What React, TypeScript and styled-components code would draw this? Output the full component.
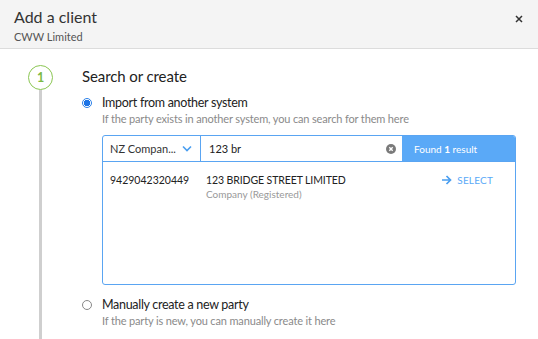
import styled, { createGlobalStyle } from "styled-components";

const GlobalStyle = createGlobalStyle`
  html, body {
    margin: 0;
    padding: 0;
    background: #fff;
    font-family: Lato, "Noto Sans", sans-serif;
    color: #222;
  }
  * { box-sizing: border-box; }
`;

const Modal = styled.div`
  width: 538px;
  height: 339px;
  overflow: hidden;
  background: #fff;
`;

const Header = styled.header`
  height: 49px;
  background: #f4f4f4;
  border-bottom: 1px solid #dcdcdc;
  padding: 7px 15px 0 14px;
  display: flex;
  justify-content: space-between;
  align-items: flex-start;
`;

const Title = styled.h1`
  margin: 0;
  font-size: 16px;
  font-weight: 400;
  line-height: 20px;
  color: #333;
`;

const Subtitle = styled.div`
  font-size: 11px;
  line-height: 16px;
  margin-top: 2px;
  color: #555;
`;

const Close = styled.button`
  border: 0;
  background: none;
  padding: 0;
  margin-top: 8px;
  width: 8px;
  height: 8px;
  cursor: pointer;
  display: flex;
`;

const Body = styled.div`
  display: flex;
  padding: 16px 0 0 28px;
`;

const Rail = styled.div`
  width: 25px;
  display: flex;
  flex-direction: column;
  align-items: center;
`;

const StepCircle = styled.div`
  width: 25px;
  height: 25px;
  border-radius: 50%;
  border: 1.5px solid #8bc653;
  color: #7cb944;
  font-size: 12.5px;
  font-weight: 700;
  display: flex;
  align-items: center;
  justify-content: center;
`;

const RailLine = styled.div`
  width: 3px;
  height: 260px;
  background: #cfcfcf;
`;

const Content = styled.div`
  margin-left: 29px;
  width: 414px;
`;

const StepTitle = styled.h2`
  margin: 0;
  font-size: 15px;
  font-weight: 400;
  line-height: 20px;
  color: #222;
  padding-top: 1px;
  letter-spacing: -0.1px;
`;

const Option = styled.div<{ $gap?: number }>`
  display: flex;
  margin-top: ${({ $gap }) => $gap ?? 0}px;
`;

const Radio = styled.span<{ $checked?: boolean }>`
  width: 10px;
  height: 10px;
  border-radius: 50%;
  margin: 4px 10px 0 0;
  flex: none;
  border: 1px solid ${({ $checked }) => ($checked ? "#2a7fe8" : "#888")};
  background: ${({ $checked }) =>
    $checked ? "radial-gradient(circle, #1d74e6 0 3px, #fff 3.4px)" : "#fff"};
`;

const OptionText = styled.div`
  flex: 1;
`;

const Label = styled.div`
  font-size: 12.5px;
  line-height: 17px;
  letter-spacing: -0.3px;
  color: #222;
`;

const Hint = styled.div`
  font-size: 11px;
  line-height: 16px;
  letter-spacing: -0.15px;
  color: #8a8a8a;
`;

const SearchBox = styled.div`
  margin-top: 8px;
  width: 414px;
  height: 150px;
  border: 1.5px solid #5aa5f2;
  border-radius: 3px;
  overflow: hidden;
`;

const SearchRow = styled.div`
  display: flex;
  height: 26px;
  border-bottom: 1.5px solid #5aa5f2;
`;

const SourceSelect = styled.div`
  width: 98px;
  border-right: 1.5px solid #5aa5f2;
  display: flex;
  align-items: center;
  justify-content: space-between;
  padding: 0 8px 0 7px;
  font-size: 11px;
  color: #333;
`;

const Query = styled.div`
  flex: 1;
  display: flex;
  align-items: center;
  justify-content: space-between;
  padding: 0 6px 0 8px;
  font-size: 11px;
  color: #222;
`;

const ClearIcon = styled.span`
  width: 10px;
  height: 10px;
  border-radius: 50%;
  background: #7a7a7a;
  display: flex;
`;

const Found = styled.div`
  width: 113px;
  background: #5aa9f7;
  color: #fff;
  font-size: 10px;
  display: flex;
  align-items: center;
  padding-left: 12px;
  b { font-weight: 700; }
`;

const ResultRow = styled.div`
  display: flex;
  padding: 11px 0 0 7px;
`;

const Number = styled.div`
  width: 96px;
  font-size: 10.5px;
  line-height: 14px;
  color: #222;
`;

const Party = styled.div`
  flex: 1;
`;

const PartyName = styled.div`
  font-size: 10.5px;
  line-height: 14px;
  letter-spacing: -0.1px;
  color: #222;
`;

const PartyType = styled.div`
  font-size: 10px;
  line-height: 14px;
  color: #999;
`;

const SelectButton = styled.button`
  border: 0;
  background: none;
  padding: 0;
  margin: 0 22px 0 0;
  height: 14px;
  display: flex;
  align-items: center;
  gap: 5px;
  font-family: inherit;
  font-size: 10px;
  color: #5aa9f7;
  letter-spacing: 0.2px;
`;

export default function App() {
  return (
    <Modal>
      <GlobalStyle />
      <Header>
        <div>
          <Title>Add a client</Title>
          <Subtitle>CWW Limited</Subtitle>
        </div>
        <Close aria-label="Close">
          <svg width="8" height="8" viewBox="0 0 8 8">
            <path d="M1 1 7 7M7 1 1 7" stroke="#333" strokeWidth="1.5" />
          </svg>
        </Close>
      </Header>
      <Body>
        <Rail>
          <StepCircle>1</StepCircle>
          <RailLine />
        </Rail>
        <Content>
          <StepTitle>Search or create</StepTitle>
          <Option $gap={8}>
            <Radio $checked />
            <OptionText>
              <Label>Import from another system</Label>
              <Hint>If the party exists in another system, you can search for them here</Hint>
              <SearchBox>
                <SearchRow>
                  <SourceSelect>
                    <span>NZ Compan...</span>
                    <svg width="10" height="7" viewBox="0 0 10 7">
                      <path d="M1 1.5 5 5.5 9 1.5" fill="none" stroke="#4a9ef0" strokeWidth="1.6" />
                    </svg>
                  </SourceSelect>
                  <Query>
                    <span>123 br</span>
                    <ClearIcon>
                      <svg width="10" height="10" viewBox="0 0 10 10">
                        <path d="M3.3 3.3 6.7 6.7M6.7 3.3 3.3 6.7" stroke="#fff" strokeWidth="1.4" />
                      </svg>
                    </ClearIcon>
                  </Query>
                  <Found>
                    <span>
                      Found <b>1</b> result
                    </span>
                  </Found>
                </SearchRow>
                <ResultRow>
                  <Number>9429042320449</Number>
                  <Party>
                    <PartyName>123 BRIDGE STREET LIMITED</PartyName>
                    <PartyType>Company (Registered)</PartyType>
                  </Party>
                  <SelectButton>
                    <svg width="11" height="10" viewBox="0 0 11 10">
                      <path d="M1 5h8.5M5.5 1l4 4-4 4" fill="none" stroke="#4a9ef0" strokeWidth="1.7" />
                    </svg>
                    SELECT
                  </SelectButton>
                </ResultRow>
              </SearchBox>
            </OptionText>
          </Option>
          <Option $gap={11}>
            <Radio />
            <OptionText>
              <Label>Manually create a new party</Label>
              <Hint>If the party is new, you can manually create it here</Hint>
            </OptionText>
          </Option>
        </Content>
      </Body>
    </Modal>
  );
}
